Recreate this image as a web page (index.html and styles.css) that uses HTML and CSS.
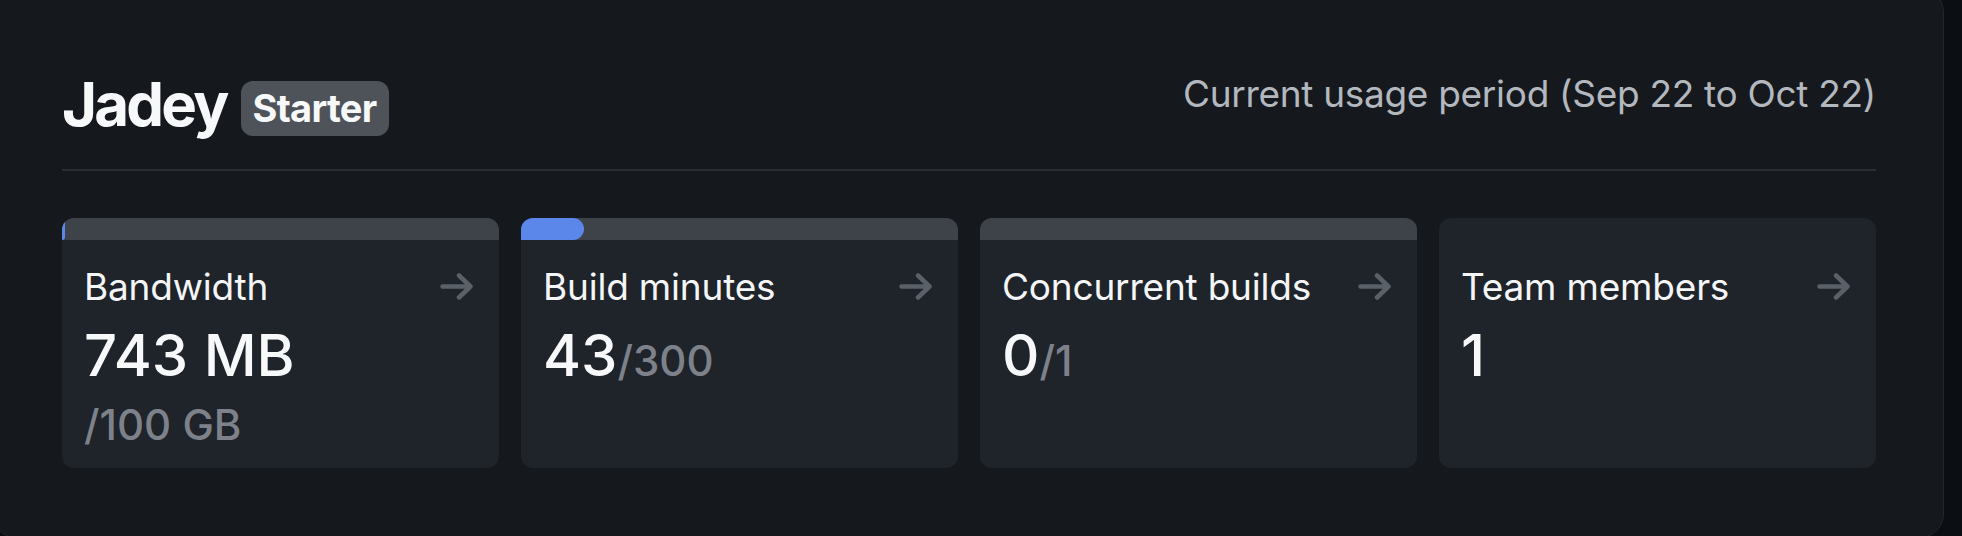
FILE: index.html
```html
<!DOCTYPE html>
<html lang="en">
<head>
<meta charset="utf-8">
<title>Usage</title>
<link rel="stylesheet" href="styles.css">
</head>
<body>
<section class="panel">
  <header class="head">
    <div class="team">
      <h1 class="team-name">Jadey</h1>
      <span class="badge">Starter</span>
    </div>
    <p class="period">Current usage period (Sep 22 to Oct 22)</p>
  </header>
  <div class="cards">
    <a class="card" href="#">
      <div class="bar"><div class="fill" style="width:0.74%"></div></div>
      <div class="body">
        <div class="row">
          <span class="label">Bandwidth</span>
          <svg class="arrow" viewBox="0 0 33 27"><path d="M2.5 13.5H30.5M19 2.5L30.5 13.5L19 24.5"/></svg>
        </div>
        <div class="value">743 MB</div>
        <div class="limit limit-block">/100 GB</div>
      </div>
    </a>
    <a class="card" href="#">
      <div class="bar"><div class="fill" style="width:14.33%"></div></div>
      <div class="body">
        <div class="row">
          <span class="label">Build minutes</span>
          <svg class="arrow" viewBox="0 0 33 27"><path d="M2.5 13.5H30.5M19 2.5L30.5 13.5L19 24.5"/></svg>
        </div>
        <div class="value">43<span class="limit">/300</span></div>
      </div>
    </a>
    <a class="card" href="#">
      <div class="bar"><div class="fill" style="width:0%"></div></div>
      <div class="body">
        <div class="row">
          <span class="label">Concurrent builds</span>
          <svg class="arrow" viewBox="0 0 33 27"><path d="M2.5 13.5H30.5M19 2.5L30.5 13.5L19 24.5"/></svg>
        </div>
        <div class="value">0<span class="limit">/1</span></div>
      </div>
    </a>
    <a class="card" href="#">
      <div class="bar bar-empty"></div>
      <div class="body">
        <div class="row">
          <span class="label">Team members</span>
          <svg class="arrow" viewBox="0 0 33 27"><path d="M2.5 13.5H30.5M19 2.5L30.5 13.5L19 24.5"/></svg>
        </div>
        <div class="value">1</div>
      </div>
    </a>
  </div>
</section>
</body>
</html>
```
FILE: styles.css
```css
* { box-sizing: border-box; }
html, body { margin: 0; padding: 0; }
body {
  background: #0b0e12;
  font-family: Inter, "Noto Sans", "Liberation Sans", sans-serif;
  color: #f4f5f7;
  overflow: hidden;
  height: 536px;
}
.panel {
  width: 1952px;
  height: 550px;
  margin: -12px 0 0 -8px;
  padding: 85px 67px 0 69px;
  background: #15191e;
  border: 1px solid #23272d;
  border-radius: 24px;
}
.head {
  display: flex;
  justify-content: space-between;
  align-items: flex-start;
  padding-bottom: 33px;
  border-bottom: 2px solid #2a2e34;
}
.team {
  display: flex;
  align-items: flex-start;
  gap: 14px;
}
.team-name {
  margin: 0;
  font-size: 60px;
  line-height: 60px;
  font-weight: 700;
  letter-spacing: -2.8px;
  color: #f7f8f9;
}
.badge {
  margin-top: 7px;
  padding: 8px 12px 9px;
  font-size: 38px;
  line-height: 38px;
  font-weight: 700;
  letter-spacing: -0.7px;
  background: #4e535a;
  border-radius: 12px;
  color: #f7f8f9;
}
.period {
  margin: 1px 0 0;
  font-size: 37px;
  line-height: 37px;
  letter-spacing: -0.3px;
  color: #b3b8bf;
}
.cards {
  margin-top: 47px;
  display: grid;
  grid-template-columns: repeat(4, 1fr);
  gap: 22px;
}
.card {
  display: block;
  height: 250px;
  background: #1f232a;
  border-radius: 12px;
  overflow: hidden;
  color: inherit;
  text-decoration: none;
}
.bar {
  height: 22px;
  background: #3e4249;
}
.bar-empty { background: transparent; }
.fill {
  height: 100%;
  background: #5b86ea;
  border-radius: 0 11px 11px 0;
}
.body {
  padding: 28px 26px 0 22px;
}
.row {
  display: flex;
  justify-content: space-between;
  align-items: center;
}
.label {
  font-size: 37px;
  line-height: 37px;
  letter-spacing: -0.2px;
  color: #f4f5f7;
}
.arrow {
  width: 33px;
  height: 27px;
  fill: none;
  stroke: #5a6068;
  stroke-width: 4.5;
  stroke-linecap: round;
  stroke-linejoin: round;
}
.value {
  margin-top: 21px;
  font-size: 58px;
  line-height: 58px;
  font-weight: 500;
  color: #f7f8f9;
}
.limit {
  font-size: 42px;
  font-weight: 500;
  color: #7d828a;
}
.limit-block {
  display: block;
  margin-top: 20px;
  line-height: 42px;
}
```
